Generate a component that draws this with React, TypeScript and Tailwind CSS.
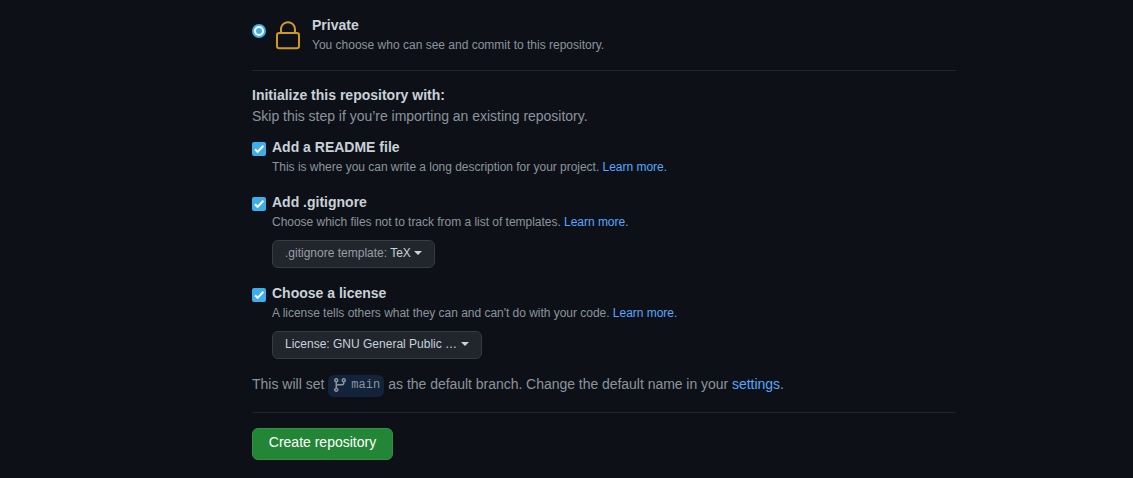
import type { ReactNode } from 'react';

function Check() {
  return (
    <span className="mt-[5px] flex size-[14px] shrink-0 items-center justify-center rounded-[2px] bg-[#3daee9]">
      <svg width="14" height="14" viewBox="0 0 14 14" fill="none" stroke="#fff" strokeWidth="2">
        <path d="M3 7.3 5.6 9.9 11.4 3.8" />
      </svg>
    </span>
  );
}

function Link({ children }: { children: ReactNode }) {
  return <a className="text-[#58a6ff]">{children}</a>;
}

function Caret() {
  return <span className="mb-0.5 inline-block border-x-4 border-t-4 border-x-transparent border-t-current align-middle" />;
}

function Option({ title, text, children }: { title: string; text: string; children?: ReactNode }) {
  return (
    <div className="flex gap-1.5">
      <Check />
      <div>
        <div className="text-sm leading-[21px] font-bold text-[#c9d1d9]">{title}</div>
        <div className="text-xs leading-[18px] tracking-[-0.025px]">
          {text} <Link>Learn more.</Link>
        </div>
        {children}
      </div>
    </div>
  );
}

export default function App() {
  return (
    <main className="h-[478px] overflow-hidden bg-[#0d1117] pt-[15px] pl-[252px] font-['Liberation_Sans',Arial,sans-serif] text-sm leading-[21px] whitespace-nowrap text-[#8b949e]">
      <div className="w-[704px]">
        <div className="flex h-[56px] border-b border-[#21262d]">
          <span className="mt-[9px] flex size-[14px] items-center justify-center rounded-full bg-[#3daee9]">
            <span className="size-[10px] rounded-full border-2 border-white" />
          </span>
          <svg className="mt-[5px] ml-1.5" width="32" height="32" viewBox="0 0 24 24" fill="#d29922" fillRule="evenodd">
            <path d="M6 9V7.25C6 3.845 8.503 1 12 1s6 2.845 6 6.25V9h.5a2.5 2.5 0 012.5 2.5v8a2.5 2.5 0 01-2.5 2.5h-13A2.5 2.5 0 013 19.5v-8A2.5 2.5 0 015.5 9H6zm1.5-1.75C7.5 4.58 9.422 2.5 12 2.5c2.578 0 4.5 2.08 4.5 4.75V9h-9V7.25zm-3 4.25a1 1 0 011-1h13a1 1 0 011 1v8a1 1 0 01-1 1h-13a1 1 0 01-1-1v-8z" />
          </svg>
          <div className="ml-2">
            <div className="font-bold text-[#c9d1d9]">Private</div>
            <div className="text-xs leading-[18px]">You choose who can see and commit to this repository.</div>
          </div>
        </div>

        <div className="mt-[14px] font-bold text-[#c9d1d9]">Initialize this repository with:</div>
        <div className="tracking-[-0.02px]">Skip this step if you’re importing an existing repository.</div>

        <div className="mt-[10px] flex flex-col">
          <Option title="Add a README file" text="This is where you can write a long description for your project." />
          <div className="mt-4">
            <Option title="Add .gitignore" text="Choose which files not to track from a list of templates.">
              <button className="mt-[9px] block h-7 w-[163px] rounded-md border border-[#363b42] bg-[#21262d] pb-0.5 pl-3 text-left text-xs leading-5 text-[#c9d1d9]">
                <span className="text-[#979ea6]">.gitignore template:</span> TeX <Caret />
              </button>
            </Option>
          </div>
          <div className="mt-[15px]">
            <Option title="Choose a license" text="A license tells others what they can and can't do with your code.">
              <button className="mt-[9px] block h-7 w-[210px] rounded-md border border-[#363b42] bg-[#21262d] pb-0.5 pl-3 text-left text-xs leading-5 text-[#c9d1d9]">
                <span className="mr-px">License: GNU General Public …</span> <Caret />
              </button>
            </Option>
          </div>
        </div>

        <div className="mt-[15px] flex h-[39px] border-b border-[#21262d]">
          <span>This will set</span>
          <span className="mt-px mr-1 ml-1 flex h-[22px] w-14 rounded-md bg-[#13233a] pl-1 font-['Liberation_Mono',monospace] text-xs leading-[20px]">
            <svg className="mt-[2px] mr-[3px]" width="16" height="16" viewBox="0 0 16 16" fill="currentColor" fillRule="evenodd">
              <path d="M11.75 2.5a.75.75 0 100 1.5.75.75 0 000-1.5zm-2.25.75a2.25 2.25 0 113 2.122V6A2.5 2.5 0 0110 8.5H6a1 1 0 00-1 1v1.128a2.251 2.251 0 11-1.5 0V5.372a2.25 2.25 0 111.5 0v1.836A2.492 2.492 0 016 7h4a1 1 0 001-1v-.628A2.25 2.25 0 019.5 3.25zM4.25 12a.75.75 0 100 1.5.75.75 0 000-1.5zM3.5 3.25a.75.75 0 111.5 0 .75.75 0 01-1.5 0z" />
            </svg>
            main
          </span>
          <span className="tracking-[-0.035px]">
            as the default branch. Change the default name in your <Link>settings</Link>.
          </span>
        </div>

        <button className="mt-[15px] block h-8 w-[141px] rounded-md border border-[#2f9040] bg-[#238636] pb-1 text-center text-sm leading-5 text-white">
          Create repository
        </button>
      </div>
    </main>
  );
}
